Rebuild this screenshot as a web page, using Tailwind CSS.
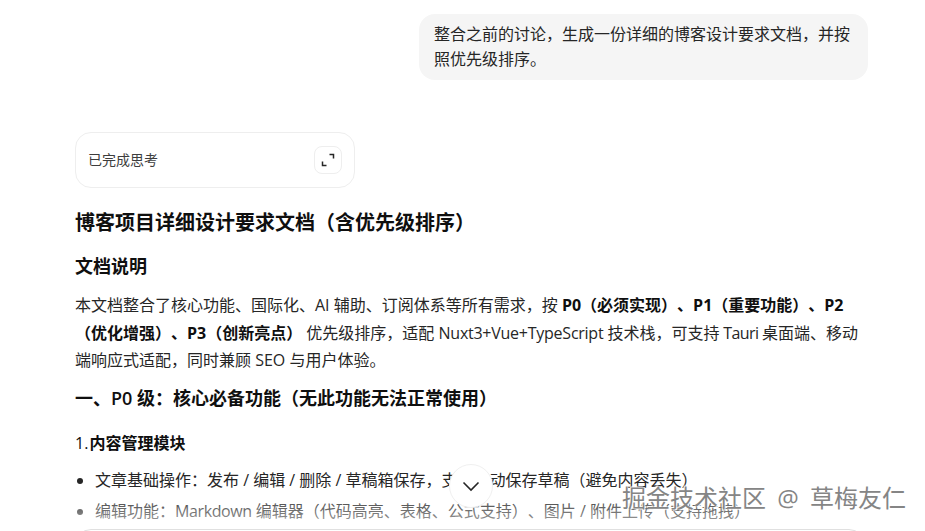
<!DOCTYPE html>
<html lang="zh-CN">
<head>
    <meta charset="UTF-8">
    <title>博客设计要求文档</title>
    <script src="https://cdn.jsdelivr.net/npm/@tailwindcss/browser@4"></script>
</head>
<body class="relative h-[531px] overflow-hidden bg-white font-['Open_Sans','Noto_Sans_CJK_SC',sans-serif] text-[16px] text-[#262626] [text-spacing-trim:space-all]">
    <main class="h-[531px] w-[868px] overflow-hidden pl-[75px] pt-[14px]">
        <!-- User message -->
        <div class="flex justify-end">
            <div class="w-[449px] rounded-[16px] bg-[#f5f5f5] px-[15px] py-[8px] leading-[25px]">
                整合之前的讨论，生成一份详细的博客设计要求文档，并按照优先级排序。
            </div>
        </div>

        <!-- Thinking card -->
        <div class="mt-[52px] flex h-[56px] w-[280px] items-center justify-between rounded-[16px] border border-[#eeeeee] pl-[12px] pr-[12px]">
            <span class="-mt-[2px] text-[14px] text-[#3d3d3d]">已完成思考</span>
            <button class="flex h-[28px] w-[28px] items-center justify-center rounded-[8px] border border-[#eeeeee]">
                <svg width="14" height="14" viewBox="0 0 14 14" fill="none" stroke="#262626" stroke-width="1.5">
                    <path d="M8.5 1.5h4v4M1.5 8.5v4h4"/>
                </svg>
            </button>
        </div>

        <!-- Answer -->
        <article class="w-[790px]">
            <h1 class="mt-[20px] text-[20px] font-bold leading-[30px] text-[#0f0f0f]">博客项目详细设计要求文档（含优先级排序）</h1>
            <h2 class="mt-[14px] text-[18px] font-bold leading-[28px] text-[#0f0f0f]">文档说明</h2>
            <p class="mt-[12px] leading-[27.5px]">
                本文档整合了核心功能、国际化、AI 辅助、订阅体系等所有需求，按 <strong class="font-bold text-[#0f0f0f]">P0（必须实现）、P1（重要功能）、P2（优化增强）、P3（创新亮点）</strong> 优先级排序，适配 <span class="tracking-[-0.25px]">Nuxt3+Vue+TypeScript</span> 技术栈，可支持<span class="tracking-[-0.55px]"> Tauri </span>桌面端、移动端响应式适配，同时兼顾 SEO 与用户体验。
            </p>
            <h2 class="mt-[9px] text-[18px] font-bold leading-[28px] text-[#0f0f0f]">一、<span class="font-semibold">P0</span> 级：核心必备功能（无此功能无法正常使用）</h2>
            <h3 class="mt-[18px] font-bold leading-[26px] text-[#0f0f0f] [word-spacing:-3px]"><span class="font-medium">1.</span> 内容管理模块</h3>
            <ul class="mt-[9px] list-disc pl-[20px] leading-[31px] marker:text-[#262626]">
                <li>文章基础操作：发布 / 编辑 / 删除 / 草稿箱保存，支持自动保存草稿（避免内容丢失）</li>
                <li>编辑功能：<span class="tracking-[-0.4px]">Markdown</span> 编辑器（代码高亮、表格、公式支持）、图片 / 附件上传（支持拖拽）</li>
            </ul>
        </article>
    </main>

    <!-- Bottom fade and input box edge -->
    <div class="absolute inset-x-0 bottom-0 h-[40px] bg-linear-to-b from-white/0 to-white/70"></div>
    <div class="absolute left-[75px] top-[529px] h-[40px] w-[790px] rounded-[16px] border border-[#e0e0e0] bg-white"></div>

    <!-- Scroll down button -->
    <button class="absolute left-[449px] top-[464px] flex h-[44px] w-[44px] items-center justify-center rounded-full border border-[#f0f0f0] bg-white">
        <svg width="20" height="20" viewBox="0 0 20 20" fill="none" stroke="#262626" stroke-width="1.6">
            <path d="M2.5 6.5l7.5 7.5 7.5-7.5"/>
        </svg>
    </button>

    <!-- Watermark -->
    <div class="absolute left-[622px] top-[482px] whitespace-nowrap text-[24px] leading-[32px] text-[#858585] [word-spacing:5px] [text-shadow:1px_1px_1px_#fff,-1px_-1px_1px_#fff]">掘金技术社区 @ 草梅友仁</div>
</body>
</html>
